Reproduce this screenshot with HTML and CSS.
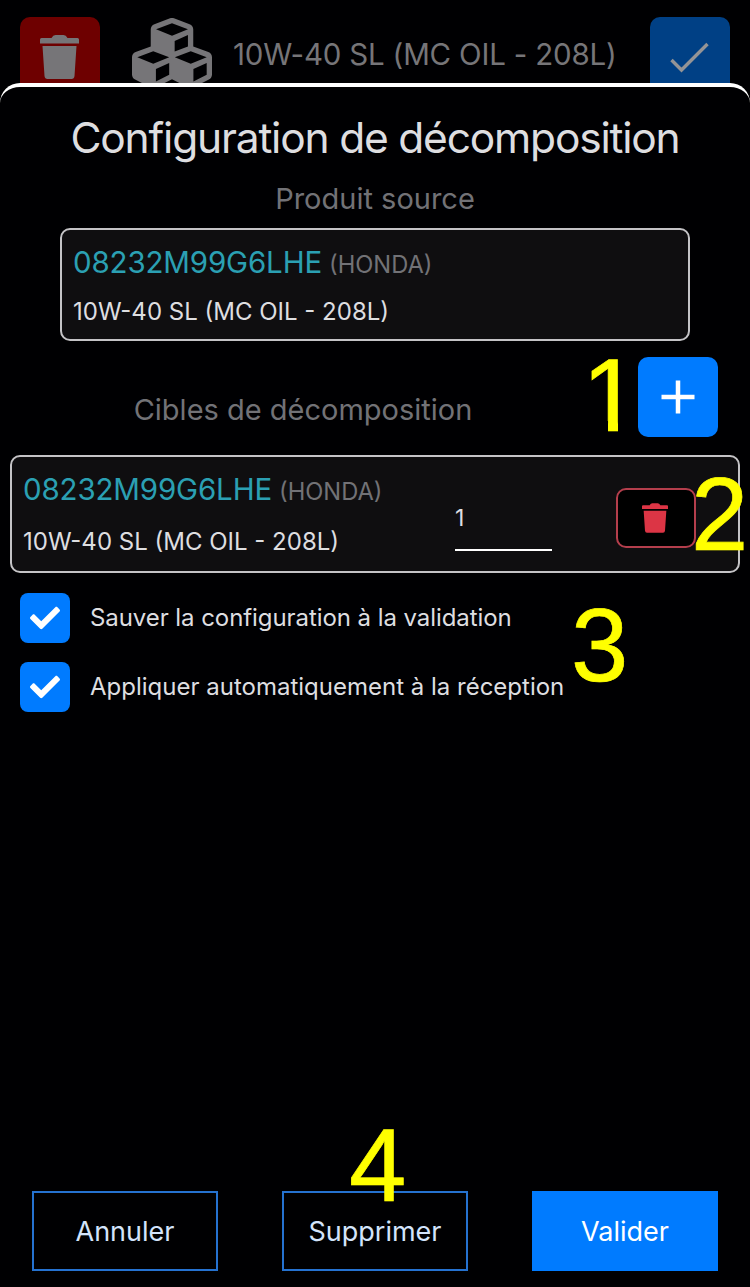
FILE: index.html
```html
<!DOCTYPE html>
<html lang="fr">
<head>
<meta charset="utf-8">
<title>Configuration de décomposition</title>
<link rel="stylesheet" href="styles.css">
</head>
<body>
<div class="screen">
  <header class="topbar">
    <span class="tile tile-red"><svg class="trash" viewBox="0 0 39 44"><path d="M0 4.500Q0 3 1.500 3H11.500Q13 0 15.500 0H23.500Q26 0 27.500 3H37.500Q39 3 39 4.500V8.500H0ZM2.500 11H36.500L34.500 41Q34.200 44 31.500 44H7.500Q4.800 44 4.500 41Z"/></svg></span>
    <svg class="cubes" viewBox="0 0 512 512"><path d="M488.600 250.200L392 214V105.500c0-15-9.300-28.400-23.400-33.700l-100-37.500c-8.100-3.100-17.100-3.100-25.300 0l-100 37.500c-14.100 5.300-23.400 18.700-23.400 33.700V214l-96.600 36.200C9.300 255.500 0 268.900 0 283.900V394c0 13.600 7.700 26.100 19.900 32.200l100 50c10.100 5.100 22.100 5.100 32.200 0l103.900-52 103.900 52c10.100 5.100 22.100 5.100 32.200 0l100-50c12.200-6.100 19.900-18.600 19.900-32.200V283.900c0-15-9.300-28.400-23.400-33.700zM358 214.800l-85 31.900v-68.200l85-37v73.300zM154 104.100l102-38.200 102 38.200v.6l-102 41.400-102-41.400v-.6zm84 291.100l-85 42.500v-79.100l85-38.800v75.400zm0-112l-102 41.400-102-41.400v-.6l102-38.200 102 38.200v.6zm240 112l-85 42.500v-79.100l85-38.800v75.400zm0-112l-102 41.400-102-41.400v-.6l102-38.200 102 38.200v.6z"/></svg>
    <span class="topbar-title">10W-40 SL (MC OIL - 208L)</span>
    <span class="tile tile-blue"><svg class="thin-check" viewBox="0 0 80 80"><path d="M21.500 43L31.500 53L57.500 27"/></svg></span>
  </header>

  <main class="sheet">
    <h1 class="title">Configuration de décomposition</h1>
    <h2 class="subtitle">Produit source</h2>
    <section class="card source">
      <div class="ref"><span class="code">08232M99G6LHE</span><span class="brand">(HONDA)</span></div>
      <div class="name">10W-40 SL (MC OIL - 208L)</div>
    </section>

    <div class="targets-head">
      <h2 class="targets-title">Cibles de décomposition</h2>
      <button class="add"><svg viewBox="0 0 34 34"><path d="M17 .5V33.500M.5 17H33.500"/></svg></button>
      <span class="mark mark-1">1</span>
    </div>

    <section class="card target">
      <div class="target-text">
        <div class="ref"><span class="code">08232M99G6LHE</span><span class="brand">(HONDA)</span></div>
        <div class="name">10W-40 SL (MC OIL - 208L)</div>
      </div>
      <div class="qty">1</div>
      <button class="remove"><svg class="trash" viewBox="0 0 39 44"><path d="M0 4.500Q0 3 1.500 3H11.500Q13 0 15.500 0H23.500Q26 0 27.500 3H37.500Q39 3 39 4.500V8.500H0ZM2.500 11H36.500L34.500 41Q34.200 44 31.500 44H7.500Q4.800 44 4.500 41Z"/></svg></button>
      <span class="mark mark-2">2</span>
    </section>

    <div class="options">
      <div class="option"><span class="box"><svg viewBox="0 0 512 512"><path d="M173.898 439.404l-166.400-166.400c-9.997-9.997-9.997-26.206 0-36.204l36.203-36.204c9.997-9.998 26.207-9.998 36.204 0L192 312.690 432.095 72.596c9.997-9.997 26.207-9.997 36.204 0l36.203 36.204c9.997 9.997 9.997 26.206 0 36.204l-294.400 294.401c-9.998 9.997-26.207 9.997-36.204-.001z"/></svg></span><span class="option-text option-save">Sauver la configuration à la validation</span></div>
      <div class="option"><span class="box"><svg viewBox="0 0 512 512"><path d="M173.898 439.404l-166.400-166.400c-9.997-9.997-9.997-26.206 0-36.204l36.203-36.204c9.997-9.998 26.207-9.998 36.204 0L192 312.690 432.095 72.596c9.997-9.997 26.207-9.997 36.204 0l36.203 36.204c9.997 9.997 9.997 26.206 0 36.204l-294.400 294.401c-9.998 9.997-26.207 9.997-36.204-.001z"/></svg></span><span class="option-text">Appliquer automatiquement à la réception</span></div>
      <span class="mark mark-3">3</span>
    </div>

    <footer class="actions">
      <button class="btn">Annuler</button>
      <button class="btn">Supprimer<span class="mark mark-4">4</span></button>
      <button class="btn btn-primary">Valider</button>
    </footer>
  </main>
</div>
</body>
</html>
```
FILE: styles.css
```css
* { box-sizing: border-box; }

body {
  margin: 0;
  background: #000002;
  color: #dedee0;
  font-family: Inter, "Liberation Sans", sans-serif;
}

svg { display: block; fill: currentColor; }
h1, h2 { margin: 0; font-weight: 400; }

button {
  margin: 0;
  padding: 0;
  border: 0;
  font: inherit;
  color: inherit;
}

.screen {
  display: flex;
  flex-direction: column;
  height: 1287px;
  overflow: hidden;
}

.topbar {
  display: flex;
  flex: none;
  height: 83px;
  padding: 17px 20px 0;
  color: #767578;
}

.tile { flex: none; width: 80px; height: 80px; border-radius: 10px; }
.tile-red { padding: 18px 0 0 20px; background: #6e0000; }
.tile-red .trash { width: 39px; height: 44px; }
.tile-blue { background: #004085; }
.thin-check { fill: none; stroke: #949496; stroke-width: 3.4; }
.cubes { flex: none; width: 80px; height: 80px; margin: -4px 0 0 32px; }

.topbar-title {
  flex: 1;
  padding-left: 21px;
  font-size: 29.500px;
  letter-spacing: -0.2px;
  line-height: 74px;
  white-space: nowrap;
}

.sheet {
  position: relative;
  display: flex;
  flex: 1;
  flex-direction: column;
  padding-top: 27px;
  border-top: 4px solid #fff;
  border-radius: 20px 20px 0 0;
  background: #000002;
}

.title {
  font-size: 42.500px;
  letter-spacing: -1.2px;
  line-height: 48px;
  text-align: center;
}

.subtitle {
  margin-top: 19px;
  color: #727276;
  font-size: 29px;
  line-height: 36px;
  text-align: center;
}

.card {
  border: 2px solid #c4c3c6;
  border-radius: 10px;
  background: #0f0e10;
}

.source { height: 113px; margin: 11px 60px 0; padding: 14px 11px 0; }
.ref { display: flex; align-items: baseline; line-height: 36px; }
.code { color: #2ba0b3; font-size: 29.500px; letter-spacing: -0.15px; }
.brand { margin-left: 7px; color: #727276; font-size: 23.700px; }
.name { margin-top: 14px; font-size: 24px; line-height: 30px; }

.targets-head {
  position: relative;
  display: flex;
  gap: 32px;
  height: 80px;
  margin: 16px 32px 0 0;
}

.targets-title {
  flex: 1;
  padding-top: 35px;
  color: #727276;
  font-size: 29px;
  line-height: 36px;
  text-align: center;
}

.add {
  display: grid;
  place-items: center;
  width: 80px;
  height: 80px;
  border-radius: 10px;
  background: #007bff;
}

.add svg { width: 34px; height: 34px; stroke: #fff; stroke-width: 4.500; }

.target {
  position: relative;
  display: flex;
  height: 118px;
  margin: 18px 10px 0;
  padding: 14px 42px 0 11px;
}

.target-text { width: 432px; }
.target-text .name { margin-top: 17px; }

.qty {
  width: 97px;
  height: 66px;
  margin: 14px 64px 0 0;
  border-bottom: 2px solid #fff;
  font-size: 23px;
  line-height: 66px;
}

.remove {
  display: grid;
  place-items: center;
  width: 80px;
  height: 60px;
  margin-top: 17px;
  padding-right: 2px;
  border: 2px solid #b43e4c;
  border-radius: 10px;
  background: #000;
  color: #dc3545;
}

.remove .trash { width: 26px; height: 30px; }

.options {
  position: relative;
  display: grid;
  gap: 19px;
  margin: 20px 20px 0;
}

.option {
  display: flex;
  align-items: center;
  gap: 20px;
  height: 50px;
  font-size: 24px;
}

.option-text { padding-bottom: 2px; }
.option-save { letter-spacing: -0.07px; }

.box {
  display: grid;
  place-items: center;
  width: 50px;
  height: 50px;
  border-radius: 8px;
  background: #007bff;
  color: #fff;
}

.box svg { width: 30px; height: 30px; }

.actions {
  display: flex;
  gap: 64px;
  margin: auto 32px 16px;
}

.btn {
  position: relative;
  flex: 1;
  height: 80px;
  border: 2px solid #2572d0;
  background: transparent;
  color: #d3e4fb;
  font-size: 27px;
}

.btn-primary { border-color: #007bff; background: #007bff; color: #fff; }

/* Numbered callouts lying over the interface */
.mark {
  position: absolute;
  color: #ff0;
  font: 103px/104px "Liberation Sans", Arial, sans-serif;
  -webkit-text-stroke: 0.7px #ff0;
}

/* The numeral one is trimmed to a plain stem without a foot */
.mark-1 {
  left: 582px;
  top: -14px;
  font-size: 104px;
  clip-path: polygon(0 0, 36px 0, 36px 100%, 26px 100%, 26px 78px, 0 78px);
}

.mark-2 { left: 679px; top: 6px; }
.mark-3 { left: 551px; top: 1px; }
.mark-4 { left: 65px; top: -79px; }
```
